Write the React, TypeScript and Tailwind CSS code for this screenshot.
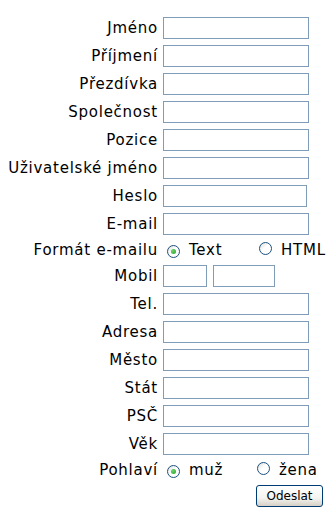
import React from 'react';

const font = "font-['DejaVu_Sans',Verdana,sans-serif]";

function Radio({ checked }: { checked?: boolean }) {
  return (
    <span className="inline-flex h-[13px] w-[13px] shrink-0 items-center justify-center rounded-full border border-[#1c5180] bg-[linear-gradient(135deg,#dcdcd7,#ffffff_45%,#ffffff)]">
      {checked && <span className="h-[5px] w-[5px] rounded-full bg-[radial-gradient(circle_at_35%_35%,#6fd36f,#21a121)]" />}
    </span>
  );
}

function Field({ label, wide = 146 }: { label: string; wide?: number }) {
  return (
    <div className="flex h-[28px] items-center">
      <div className="w-[158px] text-right">{label}</div>
      <input
        type={label === 'Heslo' ? 'password' : 'text'}
        className={`ml-[5px] h-[22px] border border-[#7f9db9] bg-white outline-none ${wide === 144 ? 'w-[144px]' : 'w-[146px]'}`}
      />
    </div>
  );
}

export default function App() {
  const top = ['Jméno', 'Příjmení', 'Přezdívka', 'Společnost', 'Pozice', 'Uživatelské jméno', 'Heslo', 'E-mail'];
  const bottom = ['Tel.', 'Adresa', 'Město', 'Stát', 'PSČ', 'Věk'];

  return (
    <div className={`w-[334px] h-[517px] bg-white pt-[14px] text-[15px] leading-none tracking-[0.75px] text-black ${font}`}>
      {top.map((l) => (
        <Field key={l} label={l} wide={l === 'Heslo' ? 144 : 146} />
      ))}

      <div className="flex h-[24px] items-center">
        <div className="w-[158px] text-right">Formát e-mailu</div>
        <div className="ml-[5px] flex w-[92px] items-center">
          <span className="ml-[4px]"><Radio checked /></span>
          <span className="ml-[9px]">Text</span>
        </div>
        <div className="flex items-center">
          <span className="ml-[4px]"><Radio /></span>
          <span className="ml-[9px]">HTML</span>
        </div>
      </div>

      <div className="flex h-[28px] items-center">
        <div className="w-[158px] text-right">Mobil</div>
        <input className="ml-[5px] h-[22px] w-[44px] border border-[#7f9db9] bg-white outline-none" />
        <input className="ml-[6px] h-[22px] w-[62px] border border-[#7f9db9] bg-white outline-none" />
      </div>

      {bottom.map((l) => (
        <Field key={l} label={l} />
      ))}

      <div className="flex h-[24px] items-center">
        <div className="w-[158px] text-right">Pohlaví</div>
        <div className="ml-[5px] flex w-[90px] items-center">
          <span className="ml-[4px]"><Radio checked /></span>
          <span className="ml-[9px]">muž</span>
        </div>
        <div className="flex items-center">
          <span className="ml-[4px]"><Radio /></span>
          <span className="ml-[9px]">žena</span>
        </div>
      </div>

      <div className="flex h-[28px] items-center">
        <button className="ml-[256px] h-[22px] w-[67px] rounded-[3px] border border-[#003c74] bg-[linear-gradient(#ffffff,#f4f4f0_60%,#d6d0c5)] text-[12px] tracking-normal text-black">
          Odeslat
        </button>
      </div>
    </div>
  );
}
